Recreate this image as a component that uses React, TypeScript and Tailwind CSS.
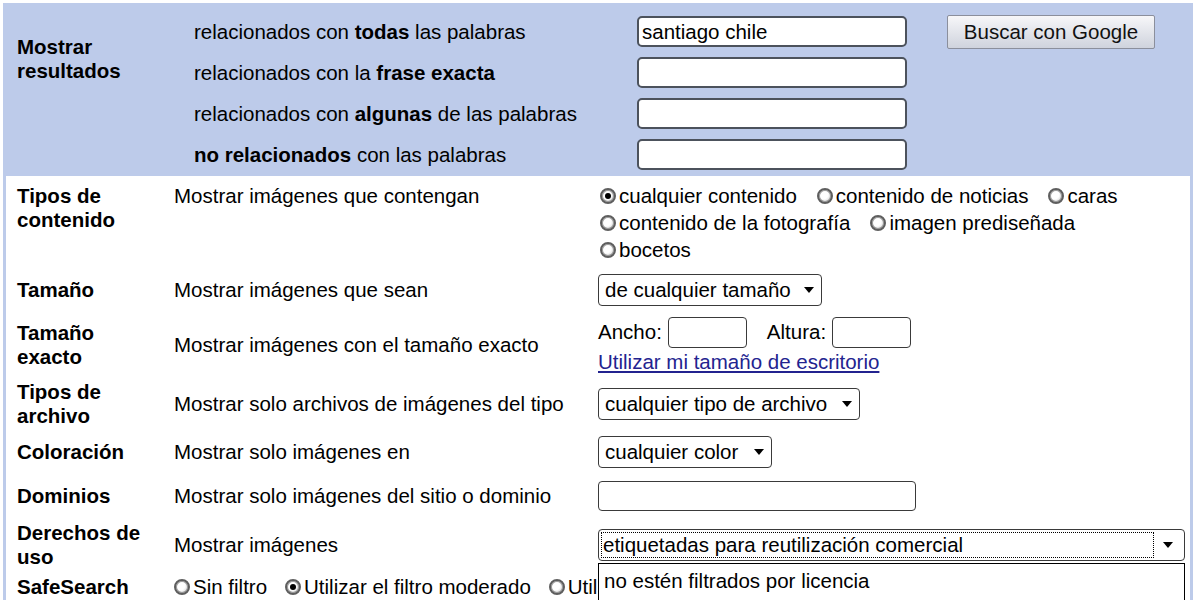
import React from "react";

function Radio({ checked = false }: { checked?: boolean }) {
  return (
    <span className="flex h-[16px] w-[16px] shrink-0 items-center justify-center rounded-full border-2 border-[#5e5e5e] bg-[radial-gradient(circle_at_40%_40%,#ffffff_40%,#bdbdbd)] shadow-[inset_0_0_0_1px_#9a9a9a]">
      {checked && <span className="h-[6px] w-[6px] rounded-full bg-black" />}
    </span>
  );
}

function Option({ label, checked = false }: { label: string; checked?: boolean }) {
  return (
    <span className="flex items-center gap-[3px]">
      <Radio checked={checked} />
      <span>{label}</span>
    </span>
  );
}

function Arrow() {
  return (
    <svg width="10" height="6" viewBox="0 0 10 6" className="shrink-0">
      <path d="M0 0h10L5 6z" fill="#000" />
    </svg>
  );
}

function Select({ label, width }: { label: string; width: string }) {
  return (
    <div
      className={`flex h-[32px] items-center justify-between rounded-[4px] border-[1.5px] border-[#3a3a3a] bg-white pl-[6px] pr-[7px] ${width}`}
    >
      <span>{label}</span>
      <Arrow />
    </div>
  );
}

const queryRows = [
  { pre: "relacionados con ", bold: "todas", post: " las palabras", value: "santiago chile" },
  { pre: "relacionados con la ", bold: "frase exacta", post: "", value: "" },
  { pre: "relacionados con ", bold: "algunas", post: " de las palabras", value: "" },
  { pre: "", bold: "no relacionados", post: " con las palabras", value: "" },
];

export default function App() {
  return (
    <div className="h-[600px] overflow-hidden bg-white font-['Liberation_Sans',Arial,sans-serif] text-[20.5px] leading-[24px] text-black">
      <div className="ml-[3px] mt-[3px] w-[1190px] border-x-[3px] border-[#bdcbea]">
        {/* query block */}
        <div className="flex bg-[#bdcbea] pb-[1px] pt-[8px]">
          <div className="w-[188px] pl-[11px] pt-[24px] font-bold">
            Mostrar
            <br />
            resultados
          </div>
          <div className="flex flex-col">
            {queryRows.map((row, i) => (
              <div key={i} className="flex h-[41px] items-center">
                <div className="w-[443px]">
                  {row.pre}
                  <b>{row.bold}</b>
                  {row.post}
                </div>
                <input
                  readOnly
                  value={row.value}
                  className="h-[31px] w-[270px] rounded-[5px] border-2 border-[#4c525c] bg-white px-[3px] text-[20.5px] text-black outline-none"
                />
                {i === 0 && (
                  <button
                    type="button"
                    className="ml-[40px] h-[34px] w-[208px] rounded-[2px] border border-[#8b8f9c] bg-gradient-to-b from-[#f7f7f9] to-[#cfd3dd] text-[20.5px] text-[#111]"
                  >
                    Buscar con Google
                  </button>
                )}
              </div>
            ))}
          </div>
        </div>

        {/* filter rows */}
        <div className="pt-[8px]">
          <div className="flex h-[84px] items-start">
            <div className="w-[168px] pl-[11px] font-bold">
              Tipos de
              <br />
              contenido
            </div>
            <div className="w-[424px]">Mostrar imágenes que contengan</div>
            <div className="-mt-[2px] flex flex-col pl-[2px] leading-[27px]">
              <div className="flex gap-[20px]">
                <Option label="cualquier contenido" checked />
                <Option label="contenido de noticias" />
                <Option label="caras" />
              </div>
              <div className="flex gap-[20px]">
                <Option label="contenido de la fotografía" />
                <Option label="imagen prediseñada" />
              </div>
              <div className="flex">
                <Option label="bocetos" />
              </div>
            </div>
          </div>

          <div className="flex h-[44px] items-center">
            <div className="w-[168px] pl-[11px] font-bold">Tamaño</div>
            <div className="w-[424px]">Mostrar imágenes que sean</div>
            <Select label="de cualquier tamaño" width="w-[224px]" />
          </div>

          <div className="flex h-[66px] items-center">
            <div className="w-[168px] pl-[11px] font-bold">
              Tamaño
              <br />
              exacto
            </div>
            <div className="w-[424px]">Mostrar imágenes con el tamaño exacto</div>
            <div className="flex flex-col gap-[2px]">
              <div className="flex items-center">
                <span className="mr-[6px]">Ancho:</span>
                <input
                  readOnly
                  className="h-[31px] w-[79px] rounded-[4px] border-[1.5px] border-[#3a3a3a] bg-white outline-none"
                />
                <span className="ml-[20px] mr-[6px]">Altura:</span>
                <input
                  readOnly
                  className="h-[31px] w-[79px] rounded-[4px] border-[1.5px] border-[#3a3a3a] bg-white outline-none"
                />
              </div>
              <a href="#" className="text-[#23238f] underline">
                Utilizar mi tamaño de escritorio
              </a>
            </div>
          </div>

          <div className="flex h-[52px] items-center">
            <div className="w-[168px] pl-[11px] font-bold">
              Tipos de
              <br />
              archivo
            </div>
            <div className="w-[424px]">Mostrar solo archivos de imágenes del tipo</div>
            <Select label="cualquier tipo de archivo" width="w-[262px]" />
          </div>

          <div className="flex h-[44px] items-center">
            <div className="w-[168px] pl-[11px] font-bold">Coloración</div>
            <div className="w-[424px]">Mostrar solo imágenes en</div>
            <Select label="cualquier color" width="w-[174px]" />
          </div>

          <div className="flex h-[44px] items-center">
            <div className="w-[168px] pl-[11px] font-bold">Dominios</div>
            <div className="w-[424px]">Mostrar solo imágenes del sitio o dominio</div>
            <input
              readOnly
              className="h-[30px] w-[318px] rounded-[4px] border-[1.5px] border-[#3a3a3a] bg-white outline-none"
            />
          </div>

          <div className="flex h-[54px] items-center">
            <div className="w-[168px] pl-[11px] font-bold">
              Derechos de
              <br />
              uso
            </div>
            <div className="w-[424px]">Mostrar imágenes</div>
            <div className="relative z-10">
              <div className="flex h-[32px] w-[587px] items-center rounded-[4px] border-[1.5px] border-[#3a3a3a] bg-white p-[2px]">
                <span className="flex h-full w-[553px] items-center border border-dotted border-black pl-[1px]">
                  etiquetadas para reutilización comercial
                </span>
                <span className="flex flex-1 justify-center">
                  <Arrow />
                </span>
              </div>
              <div className="absolute left-0 top-full mt-[2px] h-[60px] w-[587px] border border-black bg-white pl-[5px] pt-[5px]">
                no estén filtrados por licencia
              </div>
            </div>
          </div>

          <div className="flex h-[30px] items-center">
            <div className="w-[168px] pl-[11px] font-bold">SafeSearch</div>
            <div className="flex w-[424px] gap-[18px] overflow-hidden whitespace-nowrap">
              <Option label="Sin filtro" />
              <Option label="Utilizar el filtro moderado" checked />
              <Option label="Utilizar el filtro estricto" />
            </div>
          </div>
        </div>
      </div>
    </div>
  );
}
